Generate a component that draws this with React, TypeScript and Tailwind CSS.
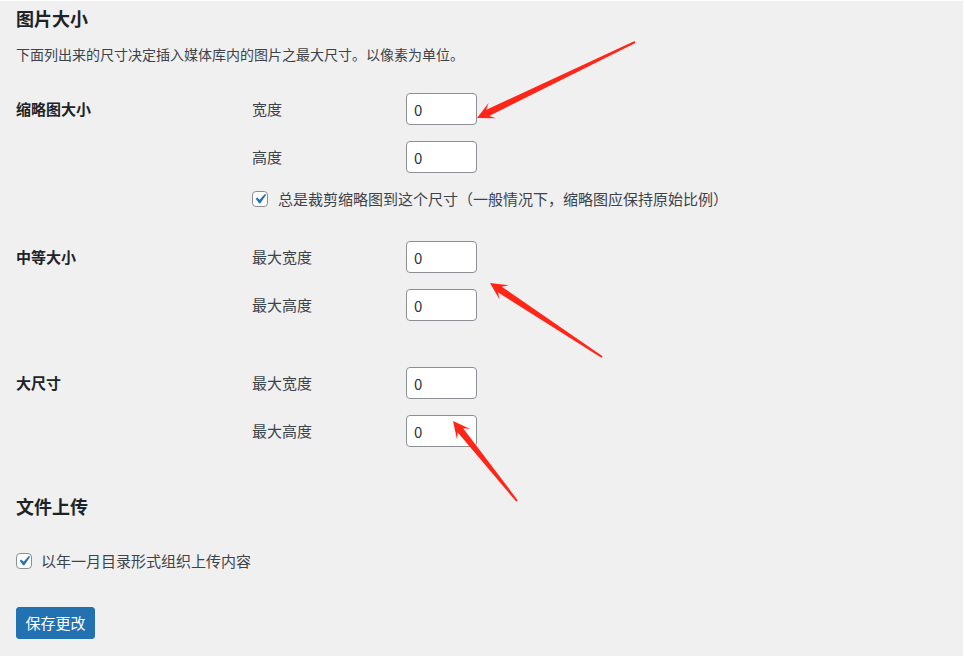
import React from "react";

function arrowPoints(
  tx: number,
  ty: number,
  px: number,
  py: number,
  headLen = 17,
  headHalf = 8.5,
  shaftHalf = 3.4,
  tailHalf = 1
) {
  const dx = px - tx;
  const dy = py - ty;
  const L = Math.sqrt(dx * dx + dy * dy);
  const ux = dx / L;
  const uy = dy / L;
  const nx = -uy;
  const ny = ux;
  const bx = px - ux * headLen;
  const by = py - uy * headLen;
  const kx = px - ux * headLen * 0.7;
  const ky = py - uy * headLen * 0.7;
  const pts: [number, number][] = [
    [tx + nx * tailHalf, ty + ny * tailHalf],
    [kx + nx * shaftHalf, ky + ny * shaftHalf],
    [bx + nx * headHalf, by + ny * headHalf],
    [px, py],
    [bx - nx * headHalf, by - ny * headHalf],
    [kx - nx * shaftHalf, ky - ny * shaftHalf],
    [tx - nx * tailHalf, ty - ny * tailHalf],
  ];
  return pts.map((p) => `${p[0].toFixed(1)},${p[1].toFixed(1)}`).join(" ");
}

function Checkbox() {
  return (
    <span className="relative inline-block w-[16px] h-[16px] shrink-0 rounded-[4px] border border-[#8c8f94] bg-white">
      <svg
        viewBox="0 0 20 20"
        width="20"
        height="20"
        className="absolute left-[-3px] top-[-3px]"
      >
        <path
          d="M14.83 4.89l1.34.94-5.81 8.38H9.02L5.78 9.67l1.34-1.25 2.57 2.4z"
          fill="#2271b1"
        />
      </svg>
    </span>
  );
}

function NumInput() {
  return (
    <div className="w-[71px] h-[32px] rounded-[4px] border border-[#8c8f94] bg-white flex items-center pl-[7px] text-[15px] text-[#2c3338] leading-none">
      0
    </div>
  );
}

function FieldRow({ label }: { label: string }) {
  return (
    <div className="flex items-center h-[32px]">
      <div className="w-[154px] text-[15px] leading-[20px] text-[#3c434a]">{label}</div>
      <NumInput />
    </div>
  );
}

function Group({
  title,
  rows,
  children,
  className,
}: {
  title: string;
  rows: string[];
  children?: React.ReactNode;
  className?: string;
}) {
  return (
    <div className={"flex " + (className ?? "")}>
      <div className="w-[236px] h-[32px] flex items-center text-[15px] font-bold leading-[20px] text-[#1d2327]">
        {title}
      </div>
      <div className="flex flex-col gap-[16px]">
        {rows.map((r) => (
          <FieldRow key={r} label={r} />
        ))}
        {children}
      </div>
    </div>
  );
}

export default function App() {
  const red = "#ff2618";
  return (
    <div className="w-[965px] h-[660px] bg-white overflow-hidden font-['Noto_Sans_CJK_SC',sans-serif]">
      <div className="relative mt-[1px] w-[963px] h-[655px] bg-[#f0f0f1] px-[16px] pt-[5px]">
        <h2 className="text-[18px] font-bold leading-[24px] text-[#1d2327]">图片大小</h2>
        <p className="mt-[14px] text-[14px] leading-[20px] text-[#3c434a]">
          下面列出来的尺寸决定插入媒体库内的图片之最大尺寸。以像素为单位。
        </p>

        <Group title="缩略图大小" rows={["宽度", "高度"]} className="mt-[29px]">
          <div className="flex items-center h-[20px] gap-[10px]">
            <Checkbox />
            <span className="text-[15px] leading-[20px] text-[#3c434a]">
              总是裁剪缩略图到这个尺寸（一般情况下，缩略图应保持原始比例）
            </span>
          </div>
        </Group>

        <Group title="中等大小" rows={["最大宽度", "最大高度"]} className="mt-[32px]" />

        <Group title="大尺寸" rows={["最大宽度", "最大高度"]} className="mt-[46px]" />

        <h2 className="mt-[47px] text-[18px] font-bold leading-[24px] text-[#1d2327]">文件上传</h2>

        <div className="mt-[33px] flex items-center h-[20px] gap-[9px]">
          <Checkbox />
          <span className="text-[15px] leading-[20px] text-[#3c434a]">以年一月目录形式组织上传内容</span>
        </div>

        <button className="mt-[36px] w-[79px] h-[32px] flex items-center justify-center rounded-[3px] bg-[#2271b1] text-white text-[15px] leading-[20px] border border-[#2271b1]">
          保存更改
        </button>

        <svg
          className="absolute left-0 top-[-1px] pointer-events-none"
          width="965"
          height="660"
          viewBox="0 0 965 660"
        >
          <polygon points={arrowPoints(635, 42, 477, 118)} fill={red} />
          <polygon points={arrowPoints(602, 357, 490, 283)} fill={red} />
          <polygon points={arrowPoints(517, 501, 453, 421)} fill={red} />
        </svg>
      </div>
    </div>
  );
}
